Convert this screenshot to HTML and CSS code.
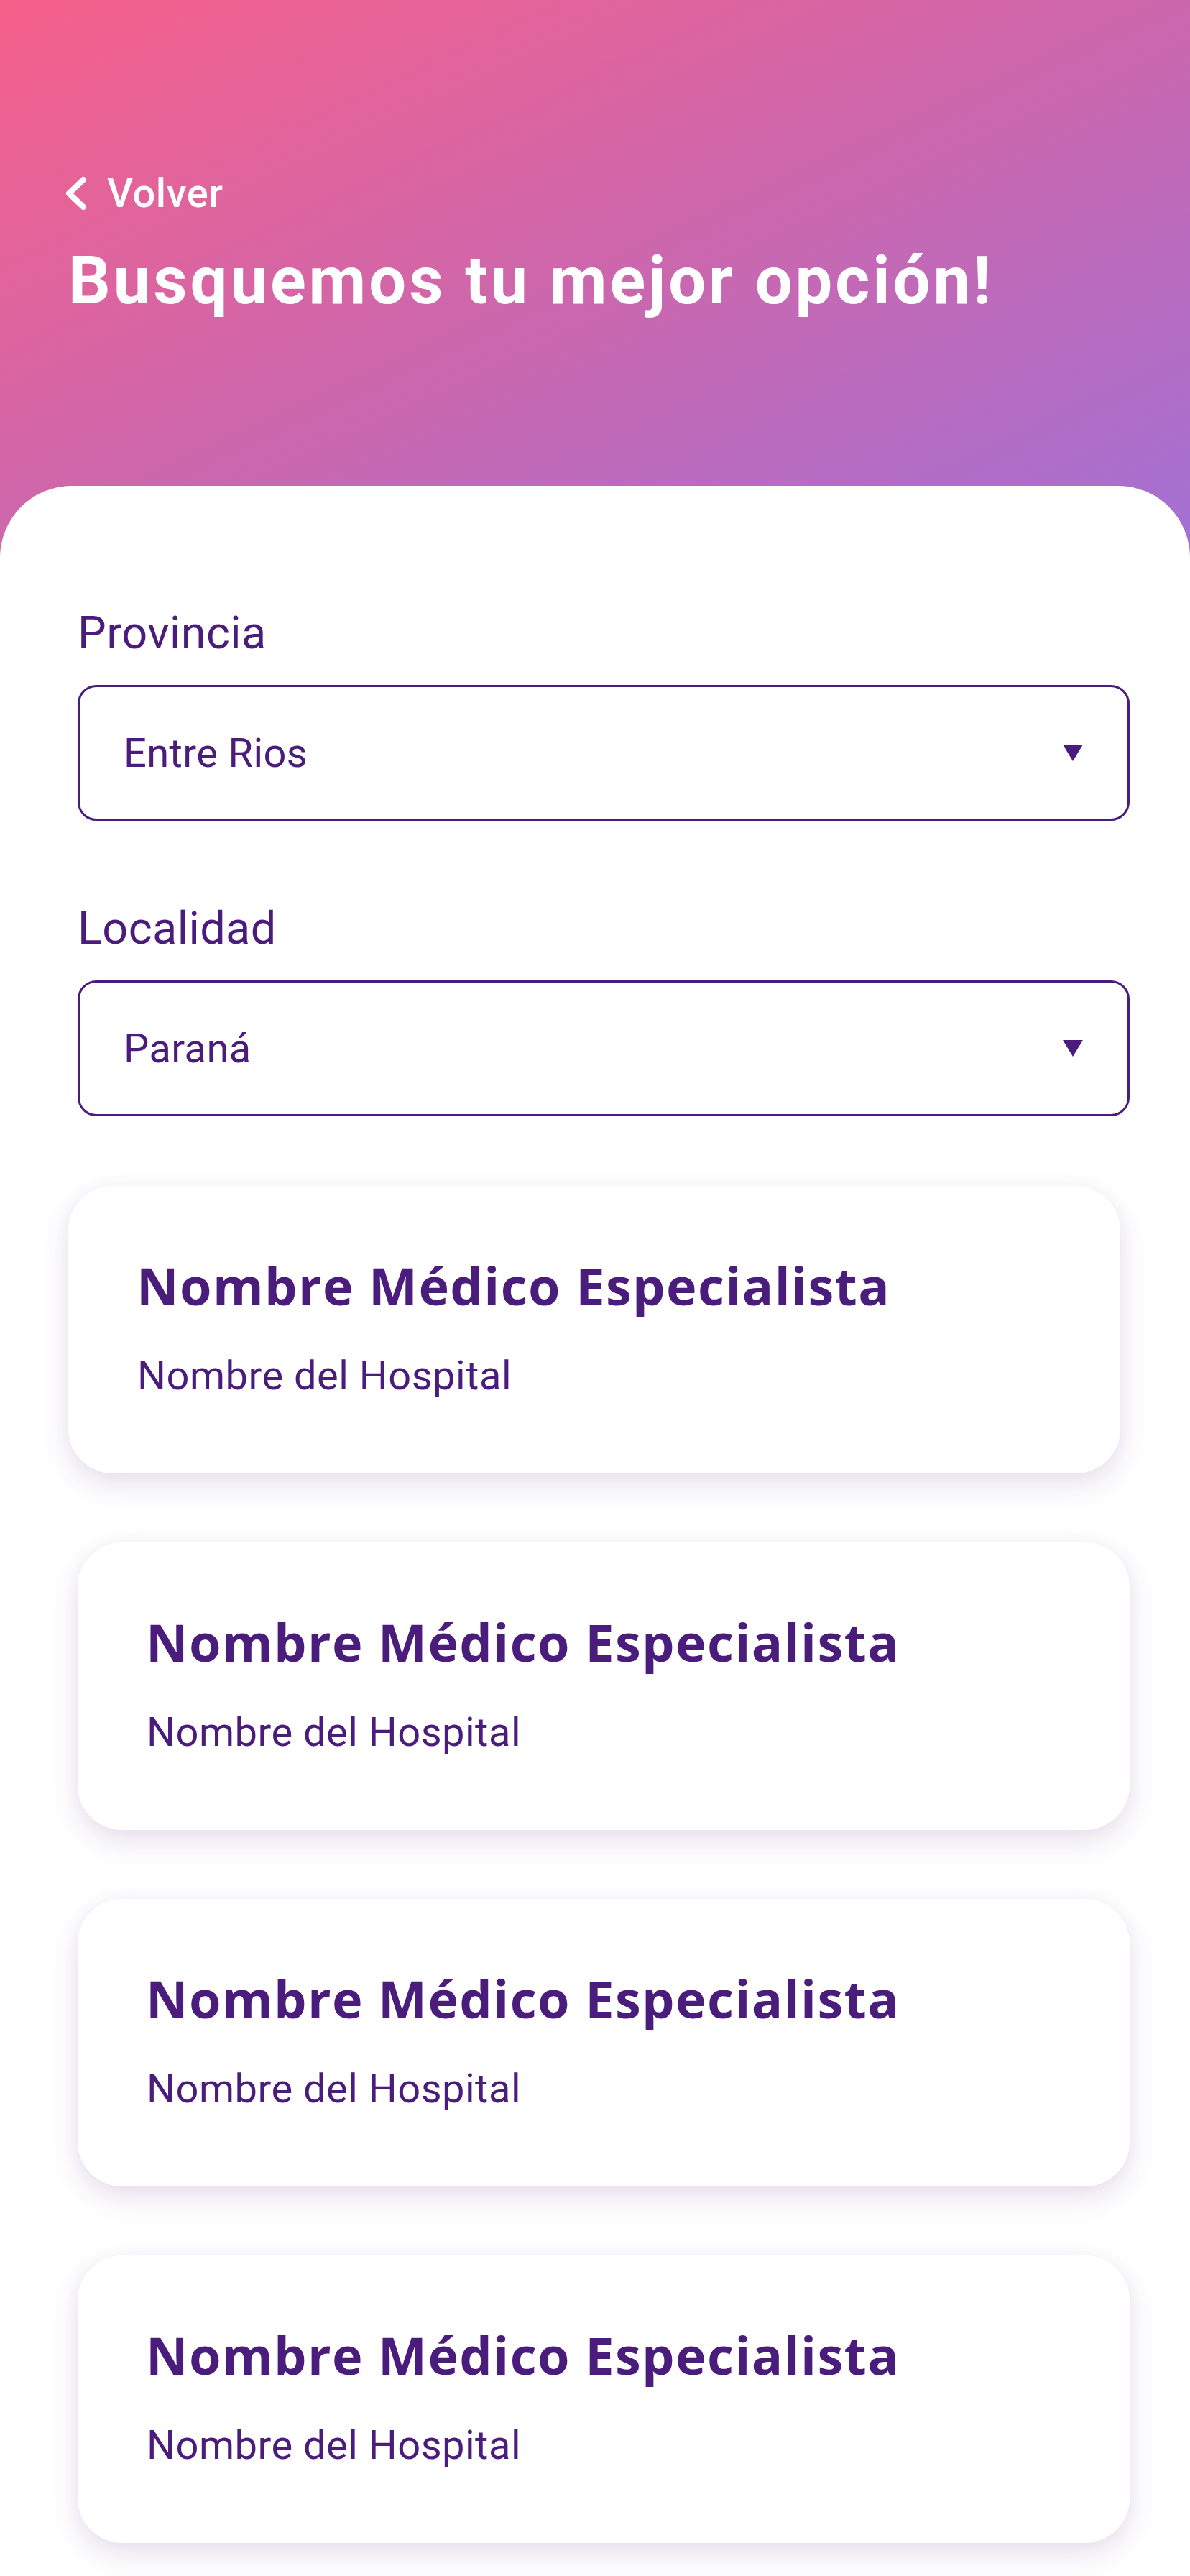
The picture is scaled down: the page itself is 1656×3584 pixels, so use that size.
FILE: index.html
```html
<!DOCTYPE html>
<html lang="es">
<head>
    <meta charset="UTF-8">
    <meta name="viewport" content="width=device-width, initial-scale=1.0">
    <title>Busquemos tu mejor opción</title>
    <link rel="stylesheet" href="styles.css">
</head>
<body>
    <div class="app">
        <!-- Gradient header -->
        <header class="hero">
            <a class="back" href="#">
                <svg class="back-icon" width="36" height="54" viewBox="0 0 36 54">
                    <polyline points="28,8 8,27 28,46" fill="none" stroke="#ffffff" stroke-width="8" stroke-linecap="round" stroke-linejoin="round"/>
                </svg>
                <span>Volver</span>
            </a>
            <h1>Busquemos tu mejor opción!</h1>
        </header>

        <main class="sheet">
            <div class="field">
                <label class="field-label">Provincia</label>
                <div class="select">
                    <span>Entre Rios</span>
                    <svg class="select-arrow" width="28" height="23" viewBox="0 0 28 23"><polygon points="0,0 28,0 14,23" fill="#4a1c7c"/></svg>
                </div>
            </div>

            <div class="field">
                <label class="field-label">Localidad</label>
                <div class="select">
                    <span>Paraná</span>
                    <svg class="select-arrow" width="28" height="23" viewBox="0 0 28 23"><polygon points="0,0 28,0 14,23" fill="#4a1c7c"/></svg>
                </div>
            </div>

            <div class="results">
                <div class="card card-shifted">
                    <h2>Nombre Médico Especialista</h2>
                    <p>Nombre del Hospital</p>
                </div>
                <div class="card">
                    <h2>Nombre Médico Especialista</h2>
                    <p>Nombre del Hospital</p>
                </div>
                <div class="card">
                    <h2>Nombre Médico Especialista</h2>
                    <p>Nombre del Hospital</p>
                </div>
                <div class="card">
                    <h2>Nombre Médico Especialista</h2>
                    <p>Nombre del Hospital</p>
                </div>
            </div>
        </main>
    </div>
</body>
</html>
```

FILE: styles.css
```css
/* Base */
body {
    margin: 0;
    padding: 0;
    font-family: Roboto, "Liberation Sans", sans-serif;
    background-color: #ffffff;
    color: #4a1c7c;
}

.app {
    width: 1656px;
    height: 3584px;
    overflow: hidden;
    background-color: #ffffff;
}

/* Header with gradient */
.hero {
    box-sizing: border-box;
    height: 776px;
    padding: 241px 0 0 88px;
    background: linear-gradient(to bottom right, #f6608a 0%, #cc67ad 50%, #a271d4 100%);
    color: #ffffff;
}

.back {
    display: flex;
    align-items: center;
    gap: 25px;
    color: #ffffff;
    text-decoration: none;
    font-size: 56px;
    font-weight: 500;
    line-height: 1;
    height: 56px;
    letter-spacing: 0.6px;
}

.hero h1 {
    margin: 48px 0 0 7px;
    font-size: 92px;
    font-weight: 700;
    line-height: 1;
    letter-spacing: 4px;
    color: #ffffff;
}

/* White sheet */
.sheet {
    margin-top: -100px;
    padding: 173px 84px 0 108px;
    background-color: #ffffff;
    border-radius: 100px 100px 0 0;
}

.field + .field {
    margin-top: 118px;
}

.field-label {
    display: block;
    font-size: 63px;
    line-height: 1;
    margin-bottom: 41px;
    letter-spacing: 0.4px;
}

.select {
    box-sizing: border-box;
    height: 189px;
    border: 3px solid #4a1c7c;
    border-radius: 26px;
    padding: 0 62px 0 61px;
    display: flex;
    align-items: center;
    justify-content: space-between;
    font-size: 56px;
    letter-spacing: 0.4px;
}

/* Result cards */
.results {
    margin-top: 97px;
    display: flex;
    flex-direction: column;
    gap: 96px;
}

.card {
    box-sizing: border-box;
    height: 400px;
    padding: 102px 60px 0 95px;
    background-color: #ffffff;
    border-radius: 62px;
    box-shadow: 0 16px 40px rgba(74, 28, 124, 0.13), 0 0 24px rgba(74, 28, 124, 0.04);
}

.card-shifted {
    margin: 0 13px 0 -13px;
}

.card h2 {
    margin: 0;
    font-family: "Open Sans", sans-serif;
    font-size: 72px;
    font-weight: 700;
    line-height: 1;
    letter-spacing: 1.4px;
}

.card p {
    margin: 62px 0 0 1px;
    font-size: 56px;
    line-height: 1;
    letter-spacing: 0.5px;
}
```
